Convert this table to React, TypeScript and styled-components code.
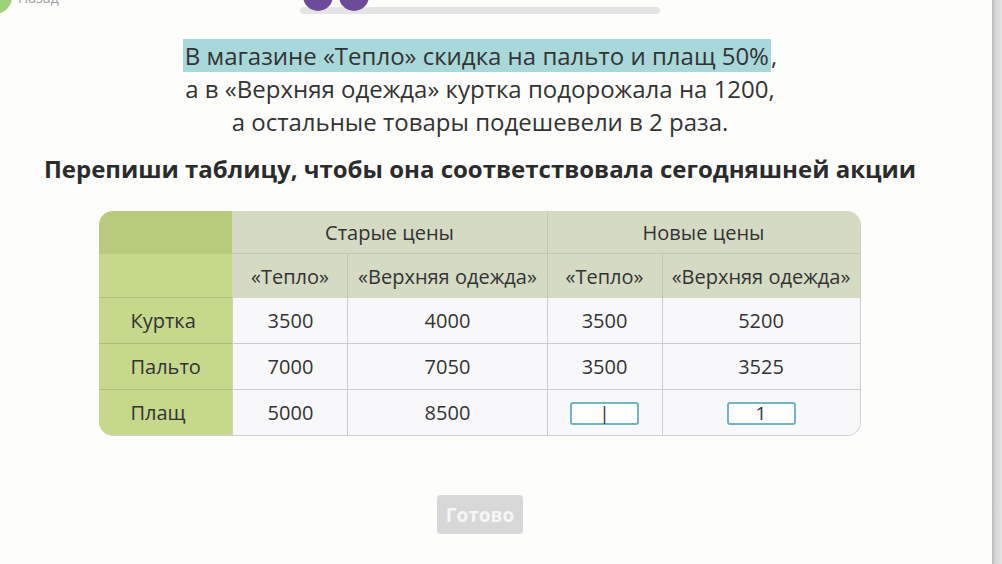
import React from "react";
import styled, { createGlobalStyle } from "styled-components";

const Global = createGlobalStyle`
  html, body { margin: 0; padding: 0; background: #fdfefc; overflow: hidden; }
  body { font-family: "Open Sans", "Noto Sans", sans-serif; color: #333; }
`;

const Page = styled.div`
  display: flex;
  width: 1002px;
  height: 564px;
  overflow: hidden;
`;

const Main = styled.div`
  width: 960px;
  display: flex;
  flex-direction: column;
  align-items: center;
`;

const Gap = styled.div`
  flex: 1;
`;

const Scrollbar = styled.div`
  width: 10px;
  background: linear-gradient(90deg, #b9b9b9 0%, #d6d6d6 30%, #e2e2e2 100%);
`;

const TopBar = styled.div`
  width: 100%;
  height: 26px;
  margin-top: -12px;
  display: grid;
  grid-template-columns: 1fr 360px 1fr;
  align-items: end;
`;

const Back = styled.div`
  display: flex;
  align-items: flex-start;
  gap: 6px;
  align-self: start;
  margin-left: -22px;
  margin-top: -8px;
`;

const BackCircle = styled.div`
  width: 34px;
  height: 34px;
  border-radius: 50%;
  background: #9fd37b;
  flex: none;
`;

const BackText = styled.span`
  font-size: 14px;
  color: #a3a3a3;
  line-height: 16px;
  margin-top: 10px;
`;

const Progress = styled.div`
  position: relative;
  height: 7px;
  border-radius: 4px;
  background: #e4e4e4;
`;

const Dot = styled.div<{ $left: number }>`
  position: absolute;
  left: ${(p) => p.$left}px;
  bottom: 3px;
  width: 30px;
  height: 30px;
  border-radius: 50%;
  background: #6c4c97;
`;

const Statement = styled.p`
  margin: 25px 0 0;
  font-size: 24px;
  line-height: 33px;
  text-align: center;
  color: #333;
`;

const Highlight = styled.span`
  display: inline-block;
  background: #a9d8db;
  padding: 0 2px;
`;

const Heading = styled.h2`
  margin: 16px 0 0;
  font-size: 24px;
  line-height: 30px;
  font-weight: 700;
  color: #2b2b2b;
  text-align: center;
`;

const Table = styled.table`
  margin-top: 27px;
  width: 760px;
  border-collapse: separate;
  border-spacing: 0;
  table-layout: fixed;
  border-radius: 14px;
  overflow: hidden;
  border-right: 1px solid #cfcfcf;
  border-bottom: 1px solid #cfcfcf;
  font-size: 20px;
  color: #333;
`;

const Corner = styled.th`
  height: 43px;
  padding: 0;
  background: #b8ca7e;
`;

const Label = styled.th<{ $last?: boolean }>`
  height: 43px;
  padding: 0;
  background: #c5d88b;
  border-bottom: ${(p) => (p.$last ? "none" : "1px solid rgba(0,0,0,0.1)")};
`;

const RowLabel = styled.th<{ $last?: boolean }>`
  height: 45px;
  padding: 0 0 0 31px;
  text-align: left;
  font-weight: 400;
  background: #c5d88b;
  border-bottom: ${(p) => (p.$last ? "none" : "1px solid rgba(0,0,0,0.12)")};
`;

const Head = styled.th<{ $divider?: boolean; $top?: boolean }>`
  height: ${(p) => (p.$top ? 42 : 43)}px;
  padding: 0;
  font-weight: 400;
  text-align: center;
  background: #d5dbc3;
  border-left: ${(p) => (p.$divider ? "1px solid #c2c7b1" : "none")};
  border-bottom: ${(p) => (p.$top ? "1px solid #c2c7b1" : "none")};
`;

const Cell = styled.td<{ $last?: boolean }>`
  height: 45px;
  padding: 0;
  text-align: center;
  background: #f8f8fa;
  border-left: 1px solid #cdcdcd;
  border-bottom: ${(p) => (p.$last ? "none" : "1px solid #cdcdcd")};
`;

const Answer = styled.span`
  display: inline-flex;
  align-items: center;
  justify-content: center;
  box-sizing: border-box;
  width: 69px;
  height: 23px;
  border: 2px solid #72b5c1;
  border-radius: 3px;
  background: #fff;
  font-size: 19px;
  line-height: 1;
  color: #333;
`;

const Done = styled.button`
  margin-top: 59px;
  width: 86px;
  height: 39px;
  border: none;
  border-radius: 4px;
  background: #d8d8d8;
  color: #f6f6f6;
  font-family: "Open Sans", "Noto Sans", sans-serif;
  font-size: 19px;
  font-weight: 700;
  padding: 0;
`;

const rows = [
  { name: "Куртка", v: ["3500", "4000", "3500", "5200"] },
  { name: "Пальто", v: ["7000", "7050", "3500", "3525"] },
];

export default function App() {
  return (
    <>
      <Global />
      <Page>
        <Main>
          <TopBar>
            <Back>
              <BackCircle />
              <BackText>Назад</BackText>
            </Back>
            <Progress>
              <Dot $left={3} />
              <Dot $left={39} />
            </Progress>
            <div />
          </TopBar>
          <Statement>
            <Highlight>В магазине «Тепло» скидка на пальто и плащ 50%</Highlight>,
            <br />а в «Верхняя одежда» куртка подорожала на 1200,
            <br />а остальные товары подешевели в 2 раза.
          </Statement>
          <Heading>Перепиши таблицу, чтобы она соответствовала сегодняшней акции</Heading>
          <Table>
            <colgroup>
              <col style={{ width: 133 }} />
              <col style={{ width: 115 }} />
              <col style={{ width: 199 }} />
              <col style={{ width: 115 }} />
              <col style={{ width: 198 }} />
            </colgroup>
            <thead>
              <tr>
                <Corner />
                <Head colSpan={2} $top>Старые цены</Head>
                <Head colSpan={2} $top $divider>Новые цены</Head>
              </tr>
              <tr>
                <Label />
                <Head>«Тепло»</Head>
                <Head $divider>«Верхняя одежда»</Head>
                <Head $divider>«Тепло»</Head>
                <Head $divider>«Верхняя одежда»</Head>
              </tr>
            </thead>
            <tbody>
              {rows.map((r) => (
                <tr key={r.name}>
                  <RowLabel>{r.name}</RowLabel>
                  {r.v.map((x, i) => (
                    <Cell key={i}>{x}</Cell>
                  ))}
                </tr>
              ))}
              <tr>
                <RowLabel $last>Плащ</RowLabel>
                <Cell $last>5000</Cell>
                <Cell $last>8500</Cell>
                <Cell $last>
                  <Answer>|</Answer>
                </Cell>
                <Cell $last>
                  <Answer>1</Answer>
                </Cell>
              </tr>
            </tbody>
          </Table>
          <Done>Готово</Done>
        </Main>
        <Gap />
        <Scrollbar />
      </Page>
    </>
  );
}
